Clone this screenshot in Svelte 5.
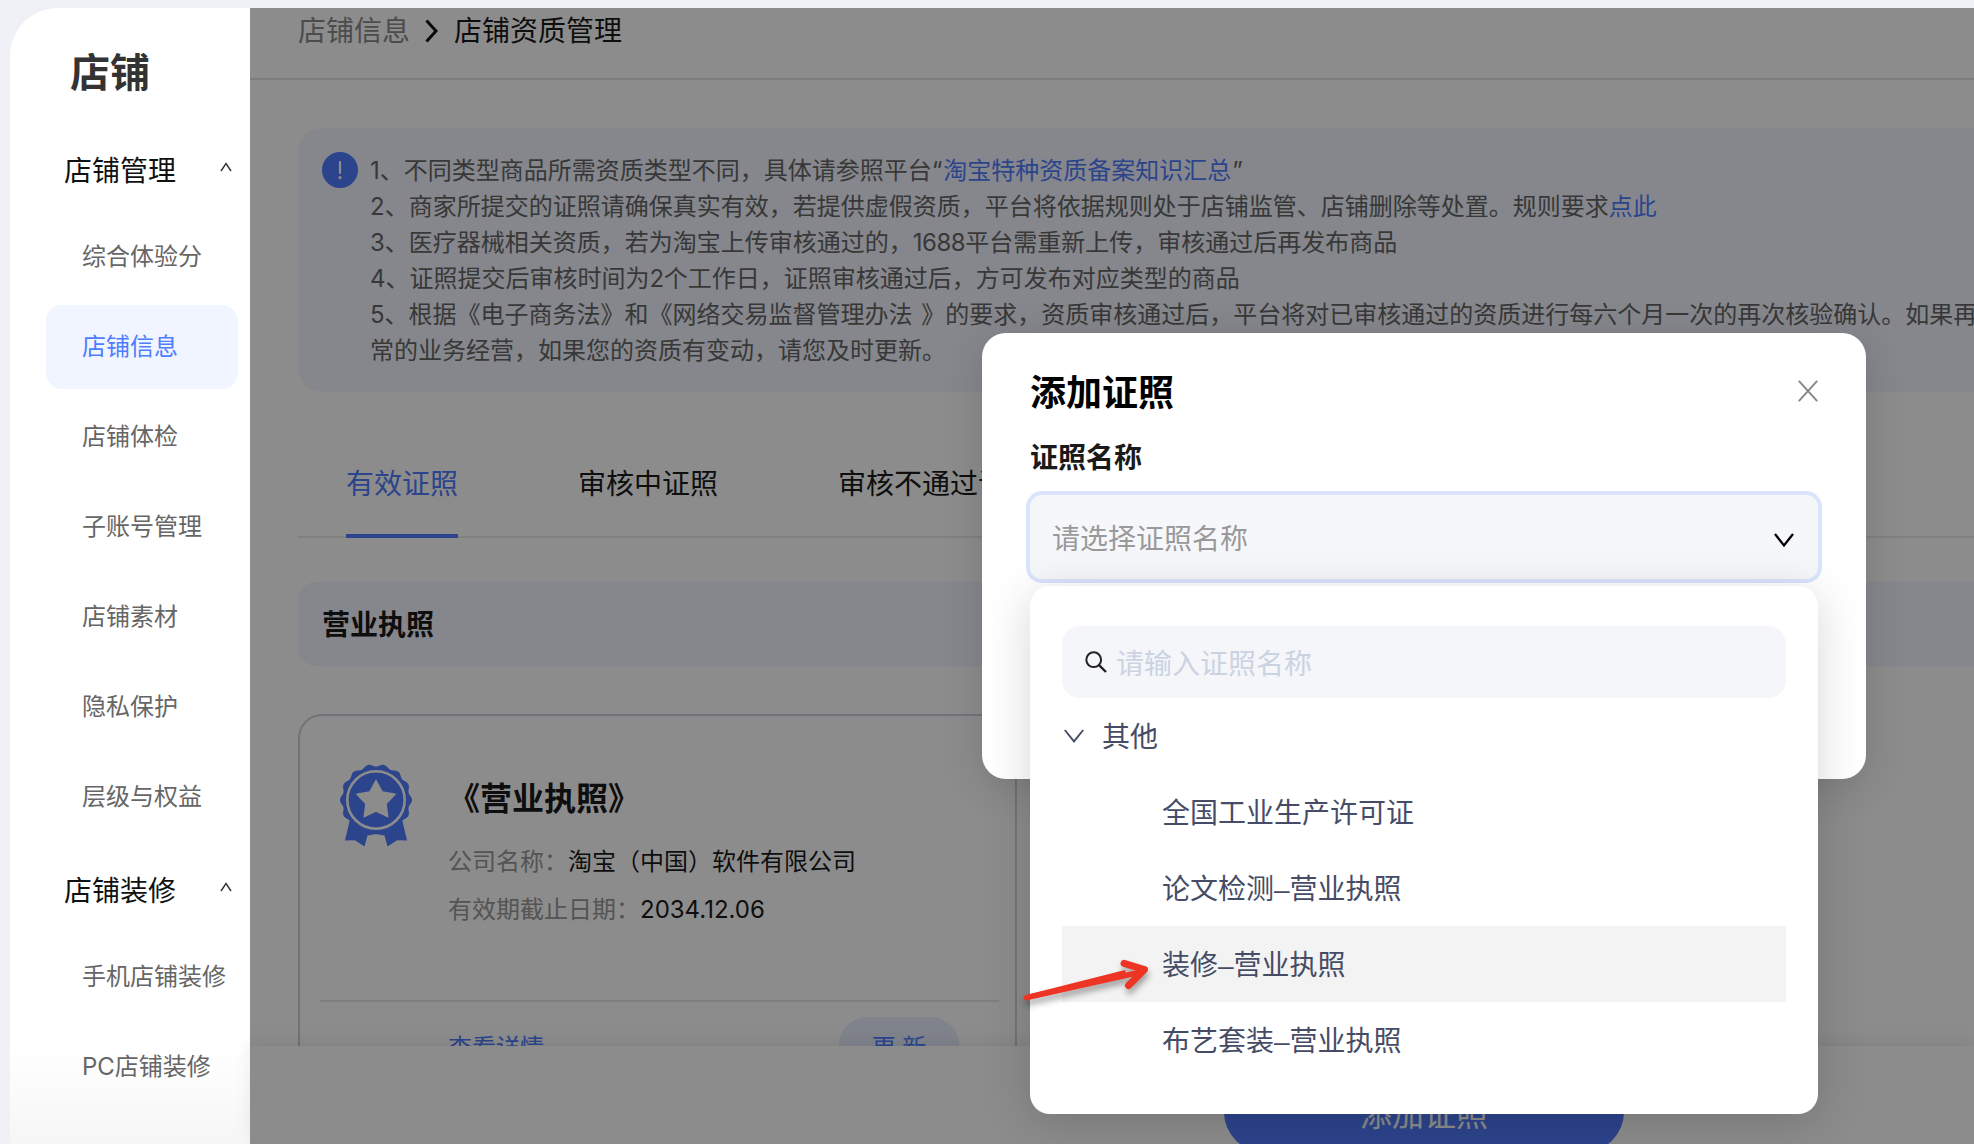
<script lang="ts">
    const groups = [
        {
            title: "店铺管理",
            items: ["综合体验分", "店铺信息", "店铺体检", "子账号管理", "店铺素材", "隐私保护", "层级与权益"],
        },
        { title: "店铺装修", items: ["手机店铺装修", "PC店铺装修"] },
    ];
    const tabs = ["有效证照", "审核中证照", "审核不通过证照"];
    const options = ["全国工业生产许可证", "论文检测–营业执照", "装修–营业执照", "布艺套装–营业执照"];

    let activeItem = $state("店铺信息");
    let activeTab = $state(0);
    let hovered = $state(2);

    // scalloped edge of the medal
    const scallop = Array.from({ length: 168 }, (_, i) => {
        const a = (i / 168) * Math.PI * 2;
        const r = 34.7 + 1.3 * Math.cos(14 * a);
        return `${(36 + r * Math.cos(a)).toFixed(2)},${(36 + r * Math.sin(a)).toFixed(2)}`;
    }).join(" ");

    const star = Array.from({ length: 10 }, (_, i) => {
        const a = (i / 10) * Math.PI * 2 - Math.PI / 2;
        const r = i % 2 ? 10.5 : 20;
        return `${(36 + r * Math.cos(a)).toFixed(2)},${(36.5 + r * Math.sin(a)).toFixed(2)}`;
    }).join(" ");
</script>

<div class="page">
    <aside class="sidebar">
        <h1>店铺</h1>
        {#each groups as group}
            <div class="group">
                <span>{group.title}</span>
                <svg width="12" height="10" viewBox="0 0 12 10">
                    <path d="M1 9L6 1.5L11 9" fill="none" stroke="#333" stroke-width="1.4" />
                </svg>
            </div>
            <ul>
                {#each group.items as item}
                    <li>
                        <button class="item" class:active={item === activeItem} onclick={() => (activeItem = item)}>
                            {item}
                        </button>
                    </li>
                {/each}
            </ul>
        {/each}
    </aside>

    <main>
        <header>
            <span class="crumb">店铺信息</span>
            <svg width="13" height="26" viewBox="0 0 13 26">
                <path d="M1.5 2.5L11 13L1.5 23.5" fill="none" stroke="#111" stroke-width="3" />
            </svg>
            <span>店铺资质管理</span>
        </header>

        <div class="content">
            <section class="notice">
                <svg class="info" width="36" height="36" viewBox="0 0 36 36">
                    <circle cx="18" cy="18" r="18" fill="#507dff" />
                    <rect x="16.9" y="9" width="2.2" height="13" rx="1" fill="#fff" />
                    <circle cx="18" cy="25.6" r="1.6" fill="#fff" />
                </svg>
                <div class="lines">
                    <p>1、不同类型商品所需资质类型不同，具体请参照平台“<a class="spaced" href="#top">淘宝特种资质备案知识汇总</a>”</p>
                    <p>2、商家所提交的证照请确保真实有效，若提供虚假资质，平台将依据规则处于店铺监管、店铺删除等处置。规则要求<a href="#top">点此</a></p>
                    <p>3、医疗器械相关资质，若为淘宝上传审核通过的，<span class="num">1688</span>平台需重新上传，审核通过后再发布商品</p>
                    <p>4、证照提交后审核时间为<span class="num">2</span>个工作日，证照审核通过后，方可发布对应类型的商品</p>
                    <p>5、根据《电子商务法》和《网络交易监督管理办法 》的要求，资质审核通过后，平台将对已审核通过的资质进行每六个月一次的再次核验确认。如果再</p>
                    <p>常的业务经营，如果您的资质有变动，请您及时更新。</p>
                </div>
            </section>

            <nav class="tabs">
                {#each tabs as tab, i}
                    <button class="tab" class:active={i === activeTab} onclick={() => (activeTab = i)}>{tab}</button>
                {/each}
            </nav>

            <h2 class="section-title">营业执照</h2>

            <article class="card">
                <div class="card-body">
                    <svg class="medal" width="72" height="83" viewBox="0 0 72 83">
                        <path d="M10 55L5 76.5L15 76.2L24.5 82.5L27.5 71.5Q36 69 44.5 71.5L47.5 82.5L57 76.2L67 76.5L62 55Z" fill="#507dff" />
                        <polygon points={scallop} fill="#507dff" />
                        <circle cx="36" cy="36" r="28.7" fill="none" stroke="#fff" stroke-width="2.6" />
                        <polygon points={star} fill="#fff" stroke="#fff" stroke-width="1.5" stroke-linejoin="round" />
                    </svg>
                    <div class="details">
                        <h3>《营业执照》</h3>
                        <p><span>公司名称：</span>淘宝（中国）软件有限公司</p>
                        <p><span>有效期截止日期：</span>2034.12.06</p>
                    </div>
                </div>
                <div class="card-actions">
                    <a href="#top">查看详情</a>
                    <button class="update">更 新</button>
                </div>
            </article>
        </div>

        <footer>
            <button class="submit">添加证照</button>
        </footer>
        <div class="mask"></div>
    </main>

    <div class="modal" role="dialog" aria-label="添加证照">
        <div class="modal-head">
            <h2>添加证照</h2>
            <svg width="20" height="22" viewBox="0 0 20 22">
                <path d="M0.8 0.8L19.2 21.2M19.2 0.8L0.8 21.2" fill="none" stroke="#888" stroke-width="2" />
            </svg>
        </div>
        <div class="label">证照名称</div>
        <div class="select">
            <span>请选择证照名称</span>
            <svg width="20" height="14" viewBox="0 0 20 14">
                <path d="M1 1L10 12.4L19 1" fill="none" stroke="#000" stroke-width="2.3" />
            </svg>
            <div class="dropdown">
                <div class="search">
                    <svg width="22" height="22" viewBox="0 0 22 22">
                        <circle cx="8.7" cy="8.7" r="7.4" fill="none" stroke="#222" stroke-width="2" />
                        <path d="M13.8 13.8L21 21" stroke="#222" stroke-width="2.4" />
                    </svg>
                    <span>请输入证照名称</span>
                </div>
                <div class="option-group">
                    <svg width="20" height="14" viewBox="0 0 20 14">
                        <path d="M0.8 1L10 12.4L19.2 1" fill="none" stroke="#464c66" stroke-width="1.9" />
                    </svg>
                    <span>其他</span>
                </div>
                {#each options as option, i}
                    <!-- svelte-ignore a11y_no_static_element_interactions -->
                    <div class="option" class:hovered={i === hovered} onmouseenter={() => (hovered = i)}>{option}</div>
                {/each}
            </div>
        </div>
    </div>

    <svg class="arrow" width="140" height="50" viewBox="0 0 140 50">
        <g fill="none" stroke="#ee3524" stroke-linecap="round" stroke-linejoin="round">
            <path d="M7.5 38.6L122 13" stroke-width="5.5" />
            <path d="M105 4.4L125.5 10.6L109.5 26.5" stroke-width="7" />
        </g>
        <path d="M7 36L106 11L108 18L8 41Z" fill="#ee3524" />
    </svg>
</div>

<style>
    :global(body) {
        background: #eff1f7;
    }

    .page {
        position: relative;
        display: flex;
        width: 1974px;
        height: 1144px;
        padding: 8px 0 0 10px;
        box-sizing: border-box;
        overflow: hidden;
        color: #1a1a1a;
        font-family: Inter, "Noto Sans CJK SC", sans-serif;
        font-size: 28px;
    }

    h1,
    h2,
    h3,
    p,
    ul {
        margin: 0;
        padding: 0;
        font-weight: normal;
    }

    li {
        list-style: none;
    }

    button {
        padding: 0;
        border: none;
        background: none;
        color: inherit;
        font: inherit;
        text-align: left;
    }

    a {
        color: #507dff;
        text-decoration: none;
    }

    svg {
        flex: none;
    }

    .sidebar {
        flex: none;
        width: 240px;
        box-sizing: border-box;
        padding: 35px 12px 0 36px;
        border-radius: 48px 0 0 0;
        background: linear-gradient(#fff 1040px, #f6f6f6 1136px);
        overflow: hidden;
    }

    h1 {
        height: 60px;
        padding-left: 24px;
        color: #333;
        font-size: 40px;
        font-weight: 600;
        line-height: 60px;
    }

    .group {
        display: flex;
        align-items: center;
        justify-content: space-between;
        height: 84px;
        margin-top: 8px;
        padding: 0 6px 0 18px;
        color: #111;
    }

    .group svg {
        margin-top: -4px;
    }

    h1 + .group {
        margin-top: 24px;
    }

    ul {
        display: flex;
        flex-direction: column;
        gap: 6px;
        padding: 4px 0 0;
    }

    .item {
        display: block;
        width: 192px;
        height: 84px;
        padding: 0 0 5px 36px;
        border-radius: 16px;
        color: #666;
        font-size: 24px;
        white-space: nowrap;
    }

    .item.active {
        background: #f1f5ff;
        color: #4f7dff;
    }

    main {
        position: relative;
        flex: 1;
        display: flex;
        flex-direction: column;
        min-width: 0;
        background: #fff;
    }

    header {
        display: flex;
        flex: none;
        gap: 16px;
        height: 72px;
        box-sizing: border-box;
        padding: 3px 0 0 48px;
        border-bottom: 2px solid #e3e3e3;
        line-height: 40px;
    }

    header svg {
        margin: 7px 0 0 -1px;
    }

    .crumb {
        color: #8a8a8a;
    }

    .content {
        flex: 1;
        min-height: 0;
        padding: 48px 0 0 48px;
        overflow: hidden;
    }

    .notice {
        display: flex;
        gap: 12px;
        height: 264px;
        box-sizing: border-box;
        padding: 24px 0 0 24px;
        border-radius: 24px 0 0 24px;
        background: #f3f6ff;
    }

    .lines {
        padding-top: 1px;
        color: #666;
        font-size: 24px;
        line-height: 36px;
        white-space: nowrap;
        word-spacing: 2px;
    }

    .spaced {
        margin: 0 1px;
    }

    .num {
        letter-spacing: -0.5px;
    }

    .tabs {
        display: flex;
        gap: 120px;
        height: 146px;
        box-sizing: border-box;
        padding: 36px 0 0 48px;
        border-bottom: 2px solid #ececec;
        white-space: nowrap;
    }

    .tab {
        height: 110px;
        box-sizing: border-box;
        padding-top: 2px;
        border-bottom: 4px solid transparent;
    }

    .tab.active {
        border-color: #507dff;
        color: #507dff;
    }

    .section-title {
        height: 84px;
        margin-top: 44px;
        padding-left: 24px;
        border-radius: 18px 0 0 18px;
        background: #f3f6ff;
        font-size: 28px;
        font-weight: 700;
        line-height: 86px;
    }

    .card {
        width: 719px;
        height: 400px;
        box-sizing: border-box;
        margin-top: 48px;
        padding: 0 16px 0 20px;
        border: 2px solid #d0d0da;
        border-radius: 24px;
    }

    .card-body {
        display: flex;
        gap: 36px;
        height: 286px;
        box-sizing: border-box;
        padding: 48px 0 0 20px;
        border-bottom: 2px solid #e6e6e6;
    }

    .details {
        font-size: 24px;
        line-height: 48px;
    }

    .details span {
        color: #999;
    }

    h3 {
        height: 70px;
        margin-top: 4px;
        font-size: 32px;
        font-weight: 600;
        line-height: 62px;
    }

    .card-actions {
        display: flex;
        align-items: center;
        justify-content: space-between;
        height: 56px;
        padding: 15px 40px 0 128px;
        font-size: 24px;
    }

    .update {
        width: 120px;
        height: 56px;
        border-radius: 28px;
        background: #e9efff;
        color: #507dff;
        text-align: center;
    }

    footer {
        display: flex;
        flex: none;
        height: 98px;
        box-sizing: border-box;
        padding: 26px 0 0 974px;
        background: #fff;
        box-shadow: 0 -4px 16px rgba(0, 0, 0, 0.08);
    }

    .submit {
        flex: none;
        width: 400px;
        height: 80px;
        border-radius: 40px;
        background: #507dff;
        color: #fff;
        font-size: 32px;
        text-align: center;
    }

    .mask {
        position: absolute;
        inset: 0;
        background: rgba(0, 0, 0, 0.45);
    }

    .modal {
        position: absolute;
        top: 333px;
        left: 982px;
        width: 884px;
        height: 446px;
        box-sizing: border-box;
        padding: 28px 48px 0;
        border-radius: 24px;
        background: #fff;
        box-shadow: 0 8px 40px rgba(0, 0, 0, 0.14);
    }

    .modal-head {
        display: flex;
        align-items: center;
        justify-content: space-between;
        height: 60px;
    }

    .modal-head h2 {
        padding-bottom: 3px;
        color: #000;
        font-size: 36px;
        font-weight: 600;
    }

    .label {
        height: 74px;
        font-weight: 600;
        line-height: 74px;
    }

    .select {
        position: relative;
        display: flex;
        align-items: center;
        justify-content: space-between;
        height: 84px;
        box-sizing: border-box;
        padding: 0 24px 0 22px;
        border-radius: 12px;
        background: #f6f7fa;
        box-shadow: 0 0 0 4px #dbe4fd;
        color: #999;
    }

    .select > svg {
        margin-top: 5px;
    }

    .dropdown {
        position: absolute;
        top: 91px;
        left: 0;
        width: 788px;
        height: 528px;
        box-sizing: border-box;
        padding: 40px 32px;
        border-radius: 20px;
        background: #fff;
        box-shadow: 0 8px 48px rgba(0, 0, 0, 0.16);
        color: #464c66;
        font-family: "Liberation Sans", "Noto Sans CJK SC", sans-serif;
    }

    .search {
        display: flex;
        align-items: center;
        gap: 9px;
        height: 72px;
        padding-left: 23px;
        border-radius: 18px;
        background: #f5f6f9;
        color: #cbd3e3;
    }

    .option-group {
        display: flex;
        align-items: center;
        gap: 18px;
        height: 76px;
        padding-left: 2px;
    }

    .option-group span {
        margin-top: -2px;
    }

    .option {
        height: 76px;
        box-sizing: border-box;
        padding: 2px 0 0 100px;
        line-height: 76px;
    }

    .option.hovered {
        background: #f3f3f3;
    }

    .arrow {
        position: absolute;
        top: 959px;
        left: 1019px;
        filter: drop-shadow(1px 5px 3px rgba(0, 0, 0, 0.35));
        overflow: visible;
    }
</style>
